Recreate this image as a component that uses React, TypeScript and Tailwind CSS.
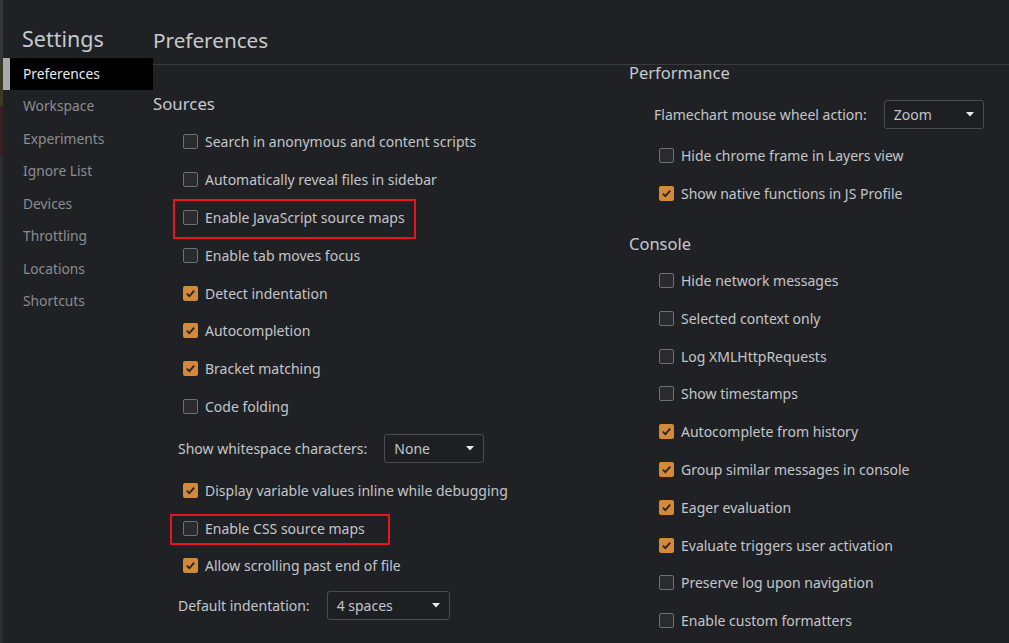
const font = { fontFamily: '"Noto Sans", "Open Sans", sans-serif' };

const navItems = [
  "Preferences",
  "Workspace",
  "Experiments",
  "Ignore List",
  "Devices",
  "Throttling",
  "Locations",
  "Shortcuts",
];

function Checkbox({ checked }: { checked: boolean }) {
  if (checked) {
    return (
      <span className="w-[15px] h-[15px] rounded-[2px] bg-[#d2893a] flex items-center justify-center shrink-0">
        <svg width="11" height="11" viewBox="0 0 11 11">
          <path d="M1.8 5.6 L4.4 8.2 L9.2 2.6" fill="none" stroke="#2a2523" strokeWidth="1.8" />
        </svg>
      </span>
    );
  }
  return <span className="w-[15px] h-[15px] rounded-[2px] border border-[#6e7074] bg-[#2a2b2e] shrink-0" />;
}

function Option({ label, checked = false, boxed }: { label: string; checked?: boolean; boxed?: string }) {
  return (
    <div className="relative h-[37.8px] flex items-center gap-[7px] pl-[30px] text-[14px] text-[#c3c6ca]">
      <Checkbox checked={checked} />
      <span>{label}</span>
      {boxed && <div className={`absolute border-2 border-[#e8151f] ${boxed}`} />}
    </div>
  );
}

function Select({ value, width }: { value: string; width: string }) {
  return (
    <div className={`h-[29px] ${width} border border-[#4a4c50] rounded-[3px] bg-[#1e1f22] flex items-center justify-between pl-[9px] pr-[9px] text-[14px] text-[#c3c6ca]`}>
      <span>{value}</span>
      <svg width="8" height="5" viewBox="0 0 8 5">
        <path d="M0 0 H8 L4 4.5 Z" fill="#e8eaed" />
      </svg>
    </div>
  );
}

function SelectRow({ label, value, width, height }: { label: string; value: string; width: string; height: string }) {
  return (
    <div className={`${height} flex items-center gap-[17px] pl-[25px] text-[14px] text-[#c3c6ca]`}>
      <span>{label}</span>
      <Select value={value} width={width} />
    </div>
  );
}

export default function App() {
  return (
    <div className="w-[1009px] h-[643px] bg-[#202124] flex overflow-hidden" style={font}>
      {/* left edge strip */}
      <div className="w-[3px] flex flex-col shrink-0">
        <div className="h-[63px] bg-[#35363a]" />
        <div className="h-[43px] bg-[#3d3a22]" />
        <div className="h-[50px] bg-[#3a1f22]" />
        <div className="flex-1 bg-[#2c2d30]" />
      </div>

      {/* sidebar */}
      <div className="w-[150px] shrink-0 flex flex-col">
        <div className="h-[58px] pl-[19px] pt-[23px] text-[21.5px] leading-[32px] text-[#c6c9cd]">Settings</div>
        {navItems.map((item, i) =>
          i === 0 ? (
            <div key={item} className="h-[32px] flex">
              <div className="w-[7px] bg-[#a8a9ab]" />
              <div className="flex-1 bg-black flex items-center pl-[13px] pt-[1px] text-[13.8px] text-[#e8eaed]">{item}</div>
            </div>
          ) : (
            <div key={item} className="h-[32.5px] flex items-center pl-[20px] pt-[1px] text-[13.8px] text-[#8b8d90]">
              {item}
            </div>
          )
        )}
      </div>

      {/* main */}
      <div className="flex-1 flex flex-col">
        <div className="h-[65px] border-b border-[#3a3b3e] pt-[25px] text-[20.7px] leading-[30px] text-[#c6c9cd]">
          Preferences
        </div>
        <div className="flex">
          <div className="w-[476px] shrink-0 flex flex-col">
            <div className="mt-[27px] h-[24px] text-[16.8px] leading-[24px] text-[#c6c9cd]">Sources</div>
            <div className="mt-[7px] flex flex-col">
              <Option label="Search in anonymous and content scripts" />
              <Option label="Automatically reveal files in sidebar" />
              <Option label="Enable JavaScript source maps" boxed="left-[20px] w-[243px] top-[0px] h-[40px]" />
              <Option label="Enable tab moves focus" />
              <Option label="Detect indentation" checked />
              <Option label="Autocompletion" checked />
              <Option label="Bracket matching" checked />
              <Option label="Code folding" />
              <SelectRow label="Show whitespace characters:" value="None" width="w-[100px]" height="h-[46px]" />
              <Option label="Display variable values inline while debugging" checked />
              <Option label="Enable CSS source maps" boxed="left-[17px] w-[220px] top-[5px] h-[31px]" />
              <Option label="Allow scrolling past end of file" checked />
              <SelectRow label="Default indentation:" value="4 spaces" width="w-[123px]" height="h-[42px]" />
            </div>
          </div>

          <div className="flex-1 flex flex-col">
            <div className="h-[16px] leading-[16px] text-[16.5px] text-[#c6c9cd]">Performance</div>
            <div className="pt-[10px]">
              <SelectRow label="Flamechart mouse wheel action:" value="Zoom" width="w-[100px]" height="h-[46px]" />
            </div>
            <Option label="Hide chrome frame in Layers view" />
            <Option label="Show native functions in JS Profile" checked />
            <div className="mt-[19px] h-[24px] text-[16.5px] leading-[24px] text-[#c6c9cd]">Console</div>
            <div className="mt-[6px] flex flex-col">
              <Option label="Hide network messages" />
              <Option label="Selected context only" />
              <Option label="Log XMLHttpRequests" />
              <Option label="Show timestamps" />
              <Option label="Autocomplete from history" checked />
              <Option label="Group similar messages in console" checked />
              <Option label="Eager evaluation" checked />
              <Option label="Evaluate triggers user activation" checked />
              <Option label="Preserve log upon navigation" />
              <Option label="Enable custom formatters" />
            </div>
          </div>
        </div>
      </div>
    </div>
  );
}
